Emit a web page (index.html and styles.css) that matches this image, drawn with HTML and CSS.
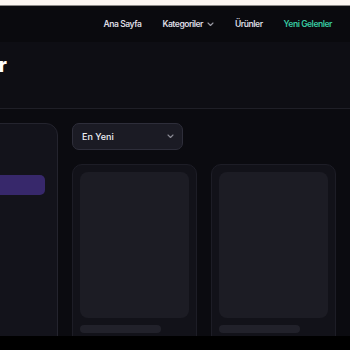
FILE: index.html
```html
<!DOCTYPE html>
<html lang="tr">
<head>
  <meta charset="UTF-8" />
  <meta name="viewport" content="width=device-width, initial-scale=1.0"/>
  <title>Yeni Gelenler</title>
  <link rel="stylesheet" href="styles.css">
</head>
<body>
  <div class="page">
    <div class="top-strip"></div>

    <!-- NAVBAR -->
    <header class="navbar">
      <nav class="nav-links">
        <a href="#" class="nav-link">Ana Sayfa</a>
        <a href="#" class="nav-link">Kategoriler
          <svg class="chev" width="7" height="5" viewBox="0 0 7 5"><path d="M1 1l2.5 2.5L6 1" fill="none" stroke="currentColor" stroke-width="1.1" stroke-linecap="round" stroke-linejoin="round"/></svg>
        </a>
        <a href="#" class="nav-link">Ürünler</a>
        <a href="#" class="nav-link active">Yeni Gelenler</a>
      </nav>
    </header>

    <!-- PAGE TITLE -->
    <section class="hero">
      <div class="hero-inner">
        <h1>Yeni Gelenler</h1>
      </div>
    </section>

    <!-- CONTENT -->
    <main class="content">
      <aside class="sidebar">
        <div class="filter-btn"></div>
      </aside>

      <div class="products">
        <div class="sort-select">
          <span>En Yeni</span>
          <svg width="7" height="5" viewBox="0 0 7 5"><path d="M1 1l2.5 2.5L6 1" fill="none" stroke="currentColor" stroke-width="1.1" stroke-linecap="round" stroke-linejoin="round"/></svg>
        </div>

        <div class="grid">
          <div class="card">
            <div class="card-img"></div>
            <div class="card-line"></div>
          </div>
          <div class="card">
            <div class="card-img"></div>
            <div class="card-line"></div>
          </div>
          <div class="card">
            <div class="card-img"></div>
            <div class="card-line"></div>
          </div>
        </div>
      </div>
    </main>
  </div>
  <div class="bottom-bar"></div>
</body>
</html>
```

FILE: styles.css
```css
* {
  box-sizing: border-box;
}

body {
  margin: 0;
  background: #000;
  font-family: 'Inter', 'Lato', sans-serif;
  overflow: hidden;
}

.page {
  height: 336px;
  overflow: hidden;
  background: #0b0b10;
}

.top-strip {
  height: 6px;
  background: #fcf6f1;
  border-bottom: 1px solid #8d8a88;
}

.navbar {
  height: 36px;
  background: #0a0a0e;
  display: flex;
  justify-content: flex-end;
  align-items: center;
  padding-right: 18px;
}

.nav-links {
  display: flex;
  align-items: center;
  gap: 21px;
}

.nav-link {
  display: flex;
  align-items: center;
  gap: 4px;
  color: #dcdce2;
  text-decoration: none;
  font-size: 8.5px;
  font-weight: 600;
  letter-spacing: -0.45px;
}

.nav-link .chev {
  color: #9a9aa4;
}

.nav-link.active {
  color: #38c9a1;
}

.hero {
  height: 67px;
  background: #0e0e14;
  border-bottom: 1px solid #1f1f27;
  padding-top: 11px;
}

.hero-inner {
  width: 7px;
  display: flex;
  justify-content: flex-end;
  white-space: nowrap;
}

.hero h1 {
  margin: 0;
  color: #fff;
  font-size: 20px;
  font-weight: 800;
  line-height: 24px;
}

.content {
  display: flex;
  gap: 14px;
  margin-left: -142px;
  padding-top: 14px;
}

.sidebar {
  flex: 0 0 200px;
  height: 240px;
  background: #13131b;
  border: 1px solid #24242e;
  border-radius: 12px;
  padding: 51px 12px 0;
}

.filter-btn {
  height: 20px;
  background: #37286b;
  border-radius: 5px;
}

.products {
  flex: 1;
}

.sort-select {
  width: 111px;
  height: 27px;
  background: #1b1b24;
  border: 1px solid #2e2e3a;
  border-radius: 7px;
  display: flex;
  align-items: center;
  justify-content: space-between;
  padding: 0 8px 0 9px;
  color: #f0f0f4;
  font-size: 9px;
  font-weight: 500;
}

.sort-select svg {
  color: #8a8a94;
}

.grid {
  display: grid;
  grid-template-columns: repeat(3, 125px);
  gap: 14px;
  margin-top: 14px;
}

.card {
  height: 190px;
  background: #121219;
  border: 1px solid #1d1d26;
  border-radius: 10px;
  padding: 7px;
}

.card-img {
  height: 146px;
  background: #1c1c24;
  border-radius: 8px;
}

.card-line {
  width: 81px;
  height: 8px;
  margin-top: 7px;
  background: #21212a;
  border-radius: 4px;
}

.bottom-bar {
  height: 14px;
  background: #000;
}
```
